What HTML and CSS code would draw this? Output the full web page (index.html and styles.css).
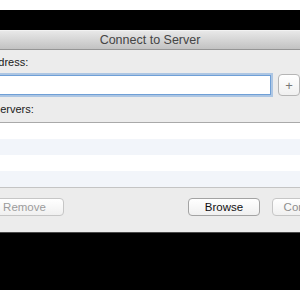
FILE: index.html
```html
<!DOCTYPE html>
<html lang="en">
<head>
    <meta charset="UTF-8">
    <title>Connect to Server</title>
    <link rel="stylesheet" href="styles.css">
</head>
<body>
    <div class="stage">
        <div class="dialog">
            <div class="titlebar">Connect to Server</div>
            <div class="dialog-body">
                <div class="field-label">Server Address:</div>
                <div class="address-row">
                    <input class="address" type="text">
                    <button class="btn plus-btn">+</button>
                </div>
                <div class="field-label favorites-label">Favorite Servers:</div>
                <ul class="servers">
                    <li></li>
                    <li></li>
                    <li></li>
                    <li></li>
                </ul>
                <div class="actions">
                    <button class="btn remove-btn" disabled>Remove</button>
                    <button class="btn browse-btn">Browse</button>
                    <button class="btn connect-btn">Connect</button>
                </div>
            </div>
        </div>
    </div>
</body>
</html>
```

FILE: styles.css
```css
* {
    box-sizing: border-box;
    margin: 0;
    padding: 0;
}

html, body {
    background: #fff;
    width: 300px;
    height: 300px;
    overflow: hidden;
}

body {
    padding-top: 10px;
    font-family: 'Liberation Sans', Arial, sans-serif;
}

.stage {
    background: #000;
    height: 280px;
    padding-top: 20px;
    overflow: hidden;
}

.dialog {
    width: 440px;
    margin-left: -70px;
    background: #ececec;
    border-bottom: 1px solid #4a4a4a;
}

.titlebar {
    height: 20px;
    line-height: 19px;
    text-align: center;
    font-size: 12.5px;
    color: #454545;
    background: linear-gradient(#e8e8e8, #c2c2c2);
    border-top: 1px solid #f2f2f2;
    border-bottom: 1px solid #959595;
}

.dialog-body {
    padding: 6px 20px 16px;
}

.field-label {
    font-size: 11px;
    line-height: 13px;
    color: #1a1a1a;
}

.address-row {
    display: flex;
    align-items: center;
    margin-top: 5px;
}

.address {
    width: 321px;
    height: 20px;
    border: 1px solid #6f9fd6;
    box-shadow: 0 0 0 2px rgba(122, 167, 220, 0.55);
    background: #fff;
    outline: none;
}

.btn {
    font-family: 'Liberation Sans', Arial, sans-serif;
    font-size: 11.5px;
    height: 18px;
    border: 1px solid #a3a3a3;
    border-radius: 4px;
    background: linear-gradient(#ffffff, #f0f0f0);
    color: #111;
}

.plus-btn {
    width: 22px;
    height: 22px;
    margin-left: 7px;
    font-size: 13px;
    color: #777;
    border-color: #b5b5b5;
}

.favorites-label {
    margin-top: 7px;
}

.servers {
    list-style: none;
    margin: 6px -20px 0;
    border-top: 1px solid #a9a9a9;
    border-bottom: 1px solid #c4c4c4;
}

.servers li {
    height: 16px;
    background: #fff;
}

.servers li:nth-child(even) {
    background: #f2f5fa;
}

.actions {
    display: flex;
    margin-top: 10px;
}

.remove-btn {
    width: 79px;
    margin-left: 35px;
    color: #9c9c9c;
    border-color: #c6c6c6;
}

.browse-btn {
    width: 72px;
    margin-left: auto;
}

.connect-btn {
    width: 66px;
    margin-left: 12px;
    margin-right: 12px;
    color: #8e8e8e;
    border-color: #c6c6c6;
}
```
